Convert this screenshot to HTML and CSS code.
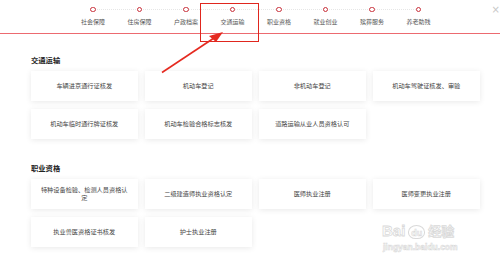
FILE: index.html
```html
<!DOCTYPE html>
<html lang="zh">
<head>
<meta charset="utf-8">
<link rel="stylesheet" href="styles.css">
</head>
<body>
<header class="topbar">
  <ul class="steps">
    <li class="step"><span class="dot"></span><span class="label">社会保障</span></li>
    <li class="step"><span class="dot"></span><span class="label">住房保障</span></li>
    <li class="step"><span class="dot"></span><span class="label">户政档案</span></li>
    <li class="step"><span class="dot"></span><span class="label">交通运输</span></li>
    <li class="step"><span class="dot"></span><span class="label">职业资格</span></li>
    <li class="step"><span class="dot"></span><span class="label">就业创业</span></li>
    <li class="step"><span class="dot"></span><span class="label">殡葬服务</span></li>
    <li class="step"><span class="dot"></span><span class="label">养老助残</span></li>
  </ul>
  <span class="close">×</span>
</header>
<main class="content">
  <section class="group">
    <h2 class="group-title">交通运输</h2>
    <div class="cards">
      <div class="card">车辆进京通行证核发</div>
      <div class="card">机动车登记</div>
      <div class="card">非机动车登记</div>
      <div class="card">机动车驾驶证核发、审验</div>
      <div class="card">机动车临时通行牌证核发</div>
      <div class="card">机动车检验合格标志核发</div>
      <div class="card">道路运输从业人员资格认可</div>
    </div>
  </section>
  <section class="group group-second">
    <h2 class="group-title">职业资格</h2>
    <div class="cards">
      <div class="card">特种设备检验、检测人员资格认定</div>
      <div class="card">二级建造师执业资格认定</div>
      <div class="card">医师执业注册</div>
      <div class="card">医师变更执业注册</div>
      <div class="card">执业兽医资格证书核发</div>
      <div class="card">护士执业注册</div>
    </div>
  </section>
</main>
<div class="mark-box"></div>
<svg class="mark-arrow" width="500" height="264" viewBox="0 0 500 264">
  <line x1="162" y1="72.5" x2="214" y2="38" stroke="#e52a20" stroke-width="1.6"/>
  <polygon points="223,32 209,36 216,42" fill="#e52a20"/>
</svg>
<div class="watermark">
  <div class="wm-top"><span class="wm-bai">Bai</span><span class="wm-paw">du</span><span class="wm-jy">经验</span></div>
  <div class="wm-url">jingyan.baidu.com</div>
</div>
</body>
</html>
```
FILE: styles.css
```css
* { box-sizing: border-box; }
html, body { margin: 0; padding: 0; background: #fff; }
body {
  width: 500px;
  height: 264px;
  overflow: hidden;
  position: relative;
  font-family: "Noto Sans CJK SC", "Noto Sans", sans-serif;
  color: #444;
}
.topbar {
  height: 34px;
  border-bottom: 1.5px solid #ec6a70;
  position: relative;
}
.steps {
  list-style: none;
  margin: 0;
  padding: 6.5px 0 0 69.75px;
  display: flex;
  position: relative;
}
.steps::before {
  content: "";
  position: absolute;
  left: 93px;
  right: 82px;
  top: 8.5px;
  border-top: 1px dotted #e6e6e6;
}
.step {
  width: 46.5px;
  display: flex;
  flex-direction: column;
  align-items: center;
  position: relative;
}
.dot {
  width: 5.5px;
  height: 5.5px;
  border: 1.3px solid #c8313b;
  border-radius: 50%;
  background: #fff;
}
.label {
  margin-top: 6px;
  font-size: 6px;
  line-height: 8px;
  color: #555;
  white-space: nowrap;
}
.close {
  position: absolute;
  right: 0;
  top: 4px;
  font-size: 10px;
  line-height: 12px;
  color: #c8c8c8;
  font-family: "DejaVu Sans", sans-serif;
}
.content {
  padding: 21px 20px 0 31px;
}
.group-title {
  margin: 0;
  font-size: 7.3px;
  line-height: 10px;
  font-weight: 700;
  color: #222;
}
.group-second { margin-top: 23.5px; }
.cards {
  margin-top: 6px;
  display: grid;
  grid-template-columns: repeat(4, 106.5px);
  column-gap: 7.5px;
  row-gap: 8px;
}
.card {
  height: 30px;
  padding: 0 9px;
  background: #fff;
  box-shadow: 0 1px 6px rgba(0, 0, 0, 0.09);
  display: flex;
  align-items: center;
  justify-content: center;
  text-align: center;
  font-size: 6.2px;
  line-height: 7.5px;
  color: #444;
}
.mark-box {
  position: absolute;
  left: 200px;
  top: 3px;
  width: 59px;
  height: 39px;
  border: 1.5px solid #e0261e;
}
.mark-arrow {
  position: absolute;
  left: 0;
  top: 0;
  pointer-events: none;
}
.watermark {
  position: absolute;
  left: 382px;
  top: 212px;
  width: 95px;
  color: transparent;
  font-family: "Liberation Sans", sans-serif;
  opacity: 0.55;
}
.wm-top {
  display: flex;
  align-items: flex-end;
  height: 27px;
  font-size: 15px;
  line-height: 16px;
  font-weight: 700;
}
.wm-bai, .wm-jy { -webkit-text-stroke: 0.8px #bbb; }
.wm-paw {
  font-size: 9px;
  line-height: 14px;
  width: 17px;
  height: 14px;
  margin: 0 3px;
  text-align: center;
  border: 1px solid #bbb;
  border-radius: 50% 50% 45% 45%;
  -webkit-text-stroke: 0.6px #bbb;
}
.wm-jy { font-family: "Noto Sans CJK SC", sans-serif; font-size: 13px; }
.wm-url {
  margin-top: 4px;
  font-size: 8.5px;
  line-height: 9px;
  font-weight: 700;
  -webkit-text-stroke: 0.6px #bbb;
  padding-left: 1px;
}
```
